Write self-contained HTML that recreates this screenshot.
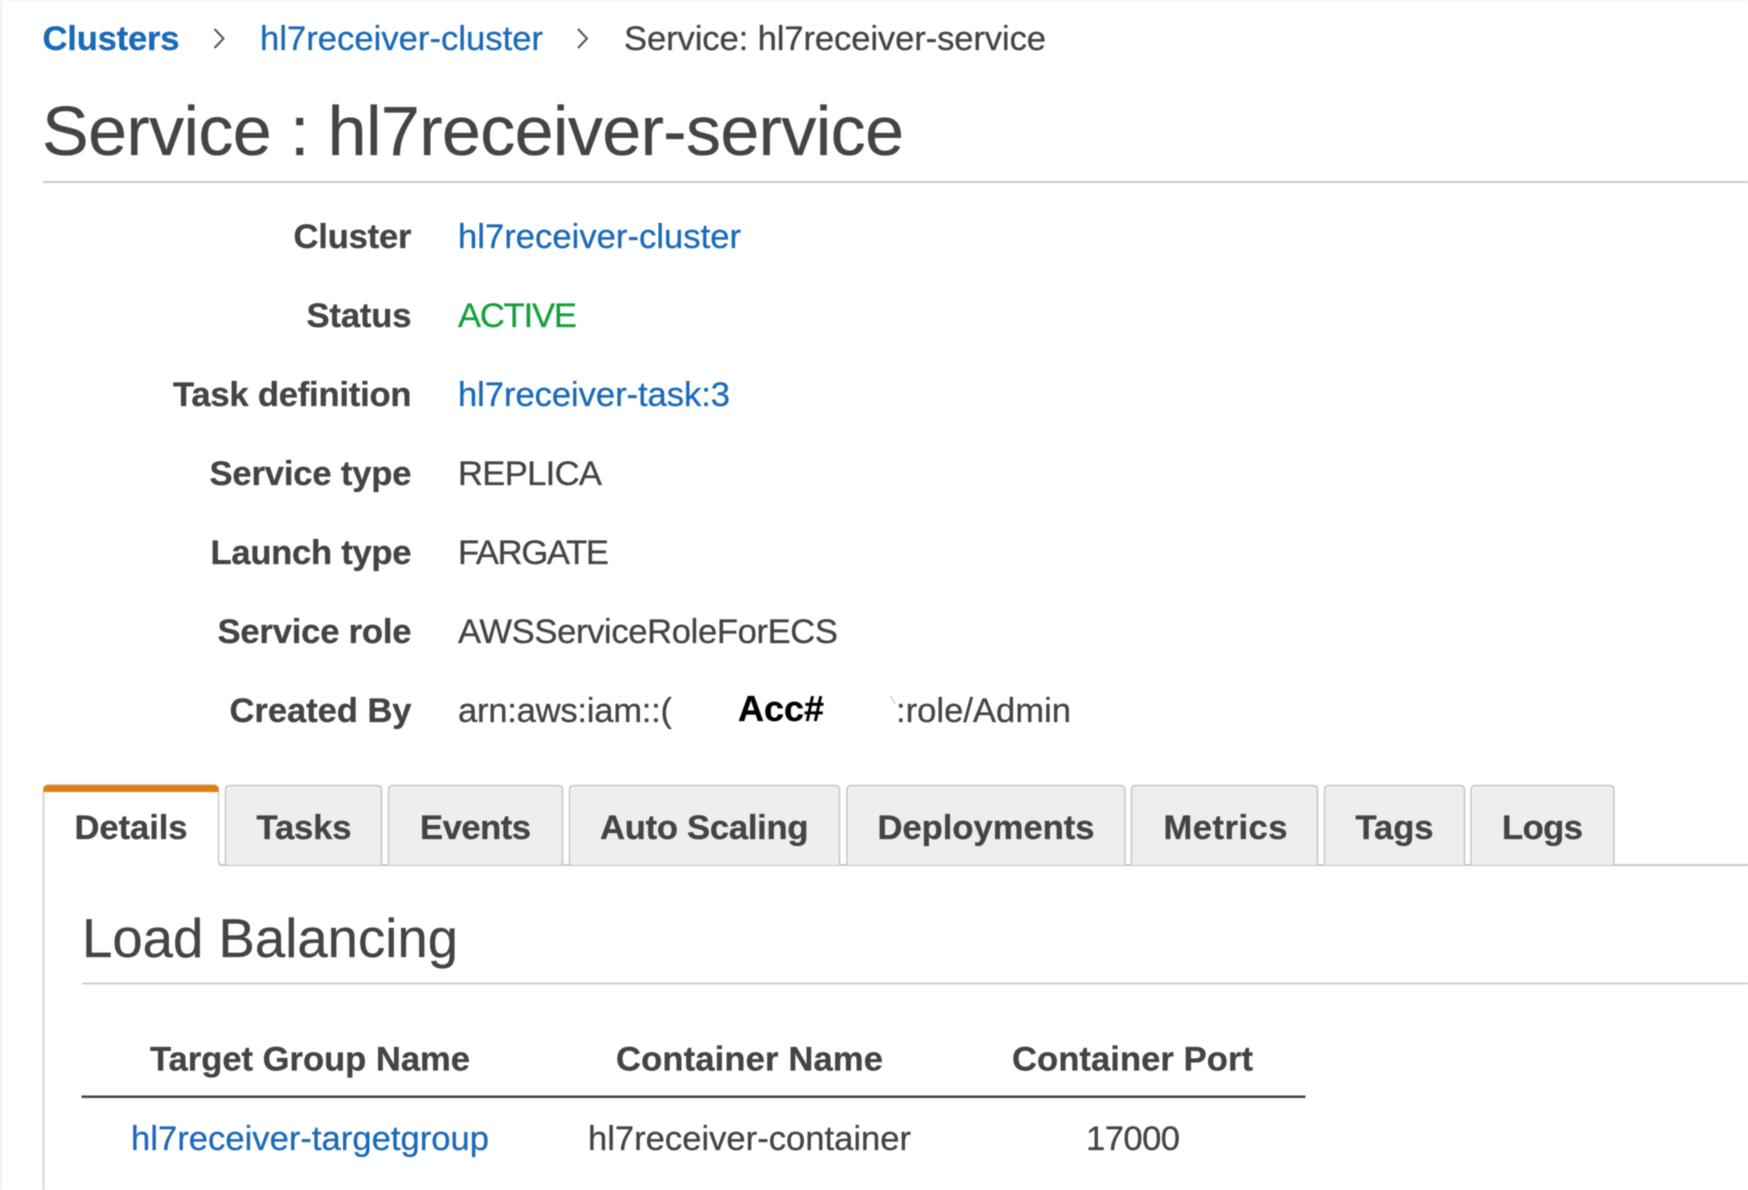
<!DOCTYPE html>
<html><head><meta charset="utf-8">
<style>
html,body{margin:0;padding:0;background:#fff;width:1748px;height:1190px;overflow:hidden}
svg{display:block;filter:blur(.5px)}
text{font-family:"Liberation Sans",Arial,sans-serif;fill:#444;stroke:#444;stroke-width:.3px;font-size:34.6px}
.b{font-weight:700}
.a{fill:#1a6ab8;stroke:#1a6ab8}
.e{text-anchor:end}
.m{text-anchor:middle}
</style></head><body>
<svg xmlns="http://www.w3.org/2000/svg" width="1748" height="1190" viewBox="0 0 1748 1190">
<rect width="1748" height="1190" fill="#fff"/>
<rect x="0" y="0" width="2" height="1190" fill="#f0f0f0"/>
<rect x="0" y="0" width="1748" height="1" fill="#f4f4f4"/>

<text class="b a" x="42.500" y="50" textLength="137">Clusters</text>
<path d="M214.500 29l9 9.500-9 9.500" fill="none" stroke="#555" stroke-width="2"/>
<text class="a" x="260" y="50" textLength="283">hl7receiver-cluster</text>
<path d="M578 29l9 9.500-9 9.500" fill="none" stroke="#555" stroke-width="2"/>
<text x="624" y="50" textLength="422">Service: hl7receiver-service</text>

<text x="42" y="155" style="font-size:70px" textLength="862">Service : hl7receiver-service</text>
<rect x="43" y="181" width="1705" height="2" fill="#c8c8c8"/>

<text class="b" x="293.500" y="248" textLength="118">Cluster</text>
<text class="a" x="458" y="248" textLength="283">hl7receiver-cluster</text>
<text class="b" x="306.500" y="327" textLength="105">Status</text>
<text x="458" y="327" style="fill:#14a03c;stroke:#14a03c" textLength="119">ACTIVE</text>
<text class="b" x="173" y="406" textLength="238.500">Task definition</text>
<text class="a" x="458" y="406" textLength="272">hl7receiver-task:3</text>
<text class="b" x="209.500" y="485" textLength="202">Service type</text>
<text x="458" y="485" textLength="144">REPLICA</text>
<text class="b" x="210.500" y="564" textLength="201">Launch type</text>
<text x="458" y="564" textLength="151">FARGATE</text>
<text class="b" x="217.500" y="643" textLength="194">Service role</text>
<text x="458" y="643" textLength="380">AWSServiceRoleForECS</text>
<text class="b" x="229.500" y="722" textLength="182">Created By</text>
<text x="458" y="722" textLength="214">arn:aws:iam::(</text>
<rect x="671.500" y="690" width="8" height="40" fill="#fff"/>
<text class="b" x="738" y="721" style="fill:#000;stroke:#000;font-size:36px" textLength="86">Acc#</text>
<text x="896" y="722" textLength="175">:role/Admin</text>
<path d="M890 696q4 4 5 8" fill="none" stroke="#bbb" stroke-width="1"/>

<!-- tabs -->
<rect x="43" y="864" width="1705" height="2" fill="#c6c6c6"/>
<g fill="#eeeeee" stroke="#c6c6c6" stroke-width="1.500">
<path d="M225.500 865V790q0-4.500 4.500-4.500h147q4.500 0 4.500 4.500V865"/>
<path d="M388.500 865V790q0-4.500 4.500-4.500h165q4.500 0 4.500 4.500V865"/>
<path d="M569.500 865V790q0-4.500 4.500-4.500h261q4.500 0 4.500 4.500V865"/>
<path d="M847 865V790q0-4.500 4.500-4.500h269q4.500 0 4.500 4.500V865"/>
<path d="M1131.500 865V790q0-4.500 4.500-4.500h177q4.500 0 4.500 4.500V865"/>
<path d="M1324.500 865V790q0-4.500 4.500-4.500h131q4.500 0 4.500 4.500V865"/>
<path d="M1471 865V790q0-4.500 4.500-4.500h134q4.500 0 4.500 4.500V865"/>
</g>
<path d="M43.500 1190V790q0-5 5-5h165q5 0 5 5V860q0 5 5 5" fill="#fff" stroke="#c8c8c8" stroke-width="1.500"/>
<path d="M43.500 792V790q0-5 5-5h165q5 0 5 5v2z" fill="#e27d0f"/>
<rect x="44.300" y="860" width="173" height="8" fill="#fff"/>
<rect x="219" y="864" width="8" height="2" fill="#c6c6c6"/>

<text class="b" x="74.500" y="839" textLength="113">Details</text>
<text class="b" x="256.500" y="839" textLength="95">Tasks</text>
<text class="b" x="420" y="839" textLength="111">Events</text>
<text class="b" x="600" y="839" textLength="208.500">Auto Scaling</text>
<text class="b" x="877.500" y="839" textLength="217">Deployments</text>
<text class="b" x="1163.500" y="839" textLength="124">Metrics</text>
<text class="b" x="1355.500" y="839" textLength="78">Tags</text>
<text class="b" x="1502" y="839" textLength="81">Logs</text>

<text x="82" y="957" style="font-size:54.500px" textLength="376">Load Balancing</text>
<rect x="82" y="982.500" width="1666" height="2" fill="#cfcfcf"/>

<text class="b" x="150" y="1070.500" textLength="320">Target Group Name</text>
<text class="b" x="616" y="1070.500" textLength="267">Container Name</text>
<text class="b" x="1012" y="1070.500" textLength="241">Container Port</text>
<rect x="81.500" y="1095.500" width="1224" height="2.500" fill="#444"/>
<text class="a" x="131" y="1150" textLength="358">hl7receiver-targetgroup</text>
<text x="588" y="1150" textLength="323">hl7receiver-container</text>
<text x="1086" y="1150" textLength="94">17000</text>
</svg>
</body></html>
